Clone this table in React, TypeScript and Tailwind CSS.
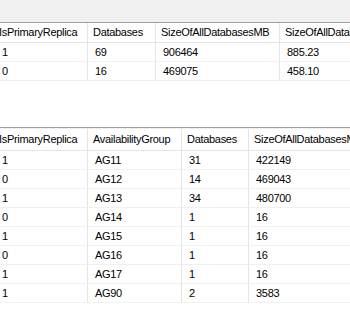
import React from "react";

const top = {
  cols: [88, 68, 124, 200],
  header: ["IsPrimaryReplica", "Databases", "SizeOfAllDatabasesMB", "SizeOfAllDatabasesGB"],
  rows: [
    ["1", "69", "906464", "885.23"],
    ["0", "16", "469075", "458.10"],
  ],
};

const bottom = {
  cols: [88, 94, 67, 200],
  header: ["IsPrimaryReplica", "AvailabilityGroup", "Databases", "SizeOfAllDatabasesMB"],
  rows: [
    ["1", "AG11", "31", "422149"],
    ["0", "AG12", "14", "469043"],
    ["1", "AG13", "34", "480700"],
    ["0", "AG14", "1", "16"],
    ["1", "AG15", "1", "16"],
    ["0", "AG16", "1", "16"],
    ["1", "AG17", "1", "16"],
    ["1", "AG90", "2", "3583"],
  ],
};

function Grid({
  data,
  headerH,
}: {
  data: { cols: number[]; header: string[]; rows: string[][] };
  headerH: string;
}) {
  return (
    <div className="flex flex-col">
      <div className={`flex ${headerH} border-b border-[#e5e5e5]`}>
        {data.header.map((h, i) => (
          <div
            key={i}
            style={{ width: data.cols[i] }}
            className={`shrink-0 flex items-center whitespace-nowrap overflow-hidden border-r border-[#e5e5e5] ${
              i === 0 ? "pl-0 -indent-[1px]" : "pl-[5px]"
            }`}
          >
            {h}
          </div>
        ))}
      </div>
      {data.rows.map((r, ri) => (
        <div key={ri} className="flex h-[19px] border-b border-[#f0f0f0]">
          {r.map((c, i) => (
            <div
              key={i}
              style={{ width: data.cols[i] }}
              className={`shrink-0 flex items-center whitespace-nowrap overflow-hidden border-r border-[#e5e5e5] ${
                i === 0 ? "pl-[2px]" : "pl-[7px]"
              }`}
            >
              {c}
            </div>
          ))}
        </div>
      ))}
    </div>
  );
}

export default function App() {
  return (
    <div
      className="w-[350px] h-[314px] bg-white overflow-hidden text-[11px] tracking-[-0.3px] text-black"
      style={{ fontFamily: '"Liberation Sans", Arial, sans-serif' }}
    >
      <div className="h-[23px] bg-[#f0f0f0] border-b border-[#a0a0a0]" />
      <Grid data={top} headerH="h-[20px]" />
      <div className="h-[46px]" />
      <div className="border-t border-[#a0a0a0] border-b border-b-[#f0f0f0]" />
      <Grid data={bottom} headerH="h-[22px]" />
    </div>
  );
}
